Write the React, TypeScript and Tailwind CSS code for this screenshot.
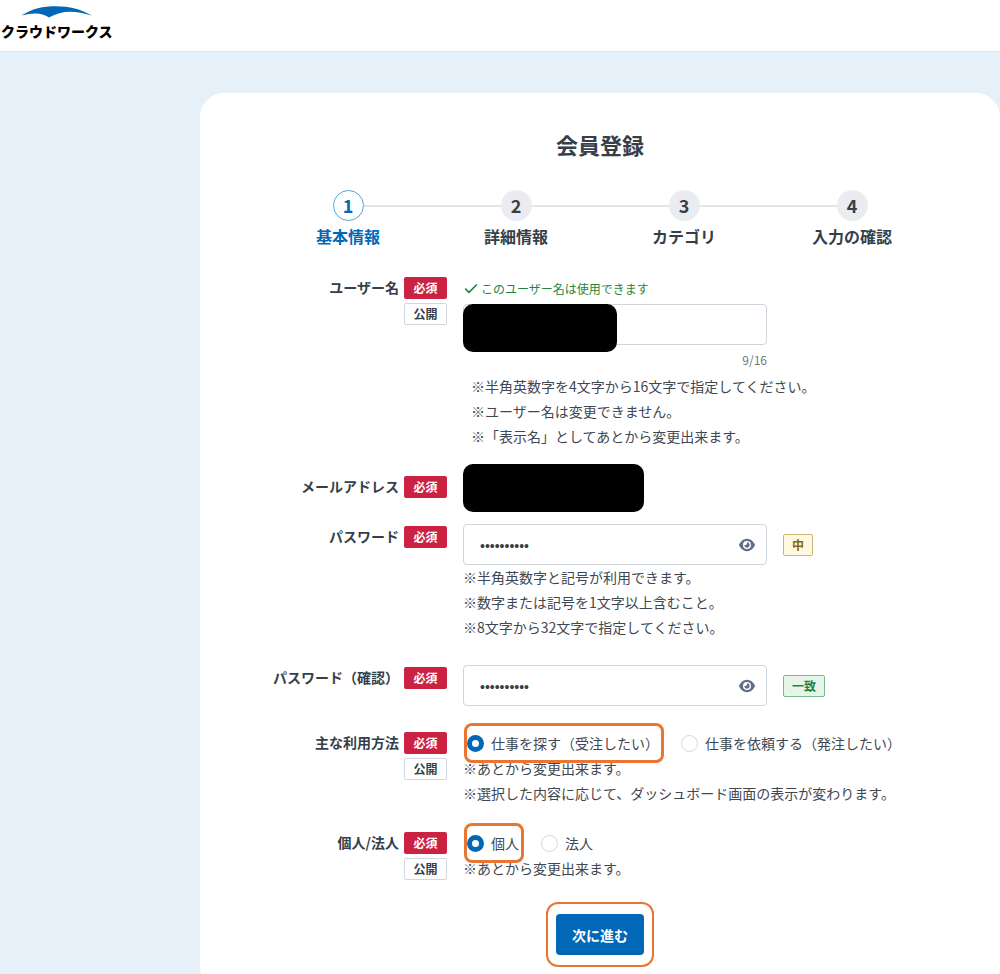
import { Check } from "lucide-react";
import type { ReactNode } from "react";
import { FaEye } from "react-icons/fa6";

const steps = ["基本情報", "詳細情報", "カテゴリ", "入力の確認"];

function Logo() {
  return (
    <a href="#" className="flex w-[114px] flex-col text-black">
      <svg viewBox="0 0 114 14" className="h-[14px] w-full" aria-hidden="true">
        <path
          d="M21.5 11.5C32 4.500 43 2.200 56 2.200S81 5 92 11.800C75 6.200 62 6 49 13.500C42 8.500 33 8.500 21.500 11.500Z"
          fill="#0068b7"
        />
      </svg>
      <span className="pl-px text-sm leading-[26px] font-black whitespace-nowrap">
        クラウドワークス
      </span>
    </a>
  );
}

function Steps() {
  return (
    <ol className="mt-[30px] grid grid-cols-4">
      {steps.map((step, i) => (
        <li key={step} className="relative flex flex-col items-center">
          {i > 0 && (
            <span className="absolute top-[15px] right-1/2 h-[2px] w-full bg-[#dfe5ea]" />
          )}
          <span
            className={
              i === 0
                ? "relative z-10 flex size-[31px] items-center justify-center rounded-full border border-[#58a3db] bg-white text-[18px] font-bold text-[#0068b7]"
                : "relative z-10 flex size-[31px] items-center justify-center rounded-full bg-[#ebecf1] text-[18px] font-bold"
            }
          >
            {i + 1}
          </span>
          <span
            className={
              i === 0
                ? "mt-[3px] text-base leading-6 font-bold text-[#0068b7]"
                : "mt-[3px] text-base leading-6 font-bold"
            }
          >
            {step}
          </span>
        </li>
      ))}
    </ol>
  );
}

interface FormRowProps {
  label: string;
  htmlFor?: string;
  open?: boolean;
  className?: string;
  labelClassName?: string;
  children: ReactNode;
}

function FormRow({
  label,
  htmlFor,
  open,
  className = "",
  labelClassName = "pt-[2px]",
  children,
}: FormRowProps) {
  return (
    <div className={`flex gap-4 ${className}`}>
      <div
        className={`flex w-[183px] shrink-0 items-start justify-end gap-[5px] ${labelClassName}`}
      >
        <label
          htmlFor={htmlFor}
          className="text-sm leading-5 font-bold whitespace-nowrap"
        >
          {label}
        </label>
        <div className="flex w-[43px] flex-col gap-1 text-center text-xs font-bold">
          <span className="rounded-xs bg-[#cb2142] leading-[22px] text-white">
            必須
          </span>
          {open && (
            <span className="rounded-xs border border-[#d3d8df] leading-5">
              公開
            </span>
          )}
        </div>
      </div>
      <div className="min-w-0 flex-1">{children}</div>
    </div>
  );
}

function Hints({ lines, className = "" }: { lines: string[]; className?: string }) {
  return (
    <div className={`text-sm leading-[25px] text-[#3f4852] ${className}`}>
      {lines.map((line) => (
        <p key={line}>{line}</p>
      ))}
    </div>
  );
}

function PasswordField({ id, children }: { id: string; children: ReactNode }) {
  return (
    <div className="flex items-center gap-4">
      <div className="relative w-[304px]">
        <input
          id={id}
          type="password"
          defaultValue="abcdef1234"
          className="block h-[41px] w-full rounded border border-[#cfd5dc] bg-white pt-[2px] pr-10 pl-4 font-['Liberation_Sans',sans-serif] text-sm"
        />
        <button
          type="button"
          aria-label="パスワードを表示"
          className="absolute inset-y-0 right-3 flex items-center text-[#5f6f87]"
        >
          <FaEye size={16} />
        </button>
      </div>
      {children}
    </div>
  );
}

interface RadioProps {
  name: string;
  label: string;
  checked?: boolean;
}

function Radio({ name, label, checked }: RadioProps) {
  return (
    <label className="relative flex items-center gap-[7px] text-sm leading-[26px] text-[#3f4852]">
      <input
        type="radio"
        name={name}
        defaultChecked={checked}
        className="size-[17px] appearance-none rounded-full border border-[#d3d8df] bg-white checked:border-[5px] checked:border-[#0068b7]"
      />
      {label}
      {checked && (
        <span className="pointer-events-none absolute -inset-y-[7px] -right-[5px] -left-[3px] rounded-lg border-[3px] border-[#ea7431]" />
      )}
    </label>
  );
}

export default function App() {
  return (
    <div className="min-h-screen bg-[#e6f0f9] font-['Noto_Sans_CJK_JP',sans-serif] text-[#363f49]">
      <header className="h-[52px] border-b border-[#dce3ea] bg-white pt-[4px]">
        <Logo />
      </header>

      <main className="pt-[41px]">
        <div className="ml-auto w-4/5 rounded-3xl bg-white px-16 pt-[35px] pb-9">
          <h1 className="text-center text-[22px] leading-8 font-bold">会員登録</h1>
          <Steps />

          <form className="mt-[29px]">
            <FormRow label="ユーザー名" htmlFor="username" open labelClassName="">
              <p className="flex items-center gap-[2px] text-xs leading-6 text-[#1e8540]">
                <Check size={16} strokeWidth={2.5} />
                このユーザー名は使用できます
              </p>
              <div className="relative mt-[3px] w-[304px]">
                <input
                  id="username"
                  type="text"
                  className="block h-[41px] w-full rounded border border-[#cfd5dc] bg-white px-4 text-sm"
                />
                <span className="absolute top-0 left-0 h-12 w-[154px] rounded-[10px] bg-black" />
                <p className="text-right text-xs leading-[29px] text-[#6b7785]">9/16</p>
              </div>
              <Hints
                className="pl-2"
                lines={[
                  "※半角英数字を4文字から16文字で指定してください。",
                  "※ユーザー名は変更できません。",
                  "※「表示名」としてあとから変更出来ます。",
                ]}
              />
            </FormRow>

            <FormRow label="メールアドレス" className="mt-[15px]" labelClassName="pt-3">
              <div className="h-12 w-[181px] rounded-[10px] bg-black" />
            </FormRow>

            <FormRow label="パスワード" htmlFor="password" className="mt-3">
              <PasswordField id="password">
                <span className="rounded-xs border border-[#cdb673] bg-[#fff9e2] px-2 text-xs leading-5 font-bold text-[#8a6800]">
                  中
                </span>
              </PasswordField>
              <Hints
                lines={[
                  "※半角英数字と記号が利用できます。",
                  "※数字または記号を1文字以上含むこと。",
                  "※8文字から32文字で指定してください。",
                ]}
              />
            </FormRow>

            <FormRow label="パスワード（確認）" htmlFor="confirm" className="mt-[25px]">
              <PasswordField id="confirm">
                <span className="rounded-xs border border-[#79b88c] bg-[#e6f4ea] px-2 text-xs leading-5 font-bold text-[#1e8540]">
                  一致
                </span>
              </PasswordField>
            </FormRow>

            <FormRow label="主な利用方法" open className="mt-6">
              <div className="flex gap-[22px] pl-1">
                <Radio name="usage" label="仕事を探す（受注したい）" checked />
                <Radio name="usage" label="仕事を依頼する（発注したい）" />
              </div>
              <Hints
                lines={[
                  "※あとから変更出来ます。",
                  "※選択した内容に応じて、ダッシュボード画面の表示が変わります。",
                ]}
              />
            </FormRow>

            <FormRow label="個人/法人" open className="mt-6">
              <div className="flex gap-[22px] pl-1">
                <Radio name="entity" label="個人" checked />
                <Radio name="entity" label="法人" />
              </div>
              <Hints lines={["※あとから変更出来ます。"]} />
            </FormRow>

            <div className="mt-[33px] flex justify-center">
              <div className="relative">
                <button
                  type="button"
                  className="block h-[41px] rounded bg-[#0068b7] px-4 text-sm font-bold text-white"
                >
                  次に進む
                </button>
                <span className="pointer-events-none absolute -inset-x-[10px] -inset-y-3 rounded-xl border-[2px] border-[#ea7431]" />
              </div>
            </div>
          </form>
        </div>
      </main>
    </div>
  );
}
